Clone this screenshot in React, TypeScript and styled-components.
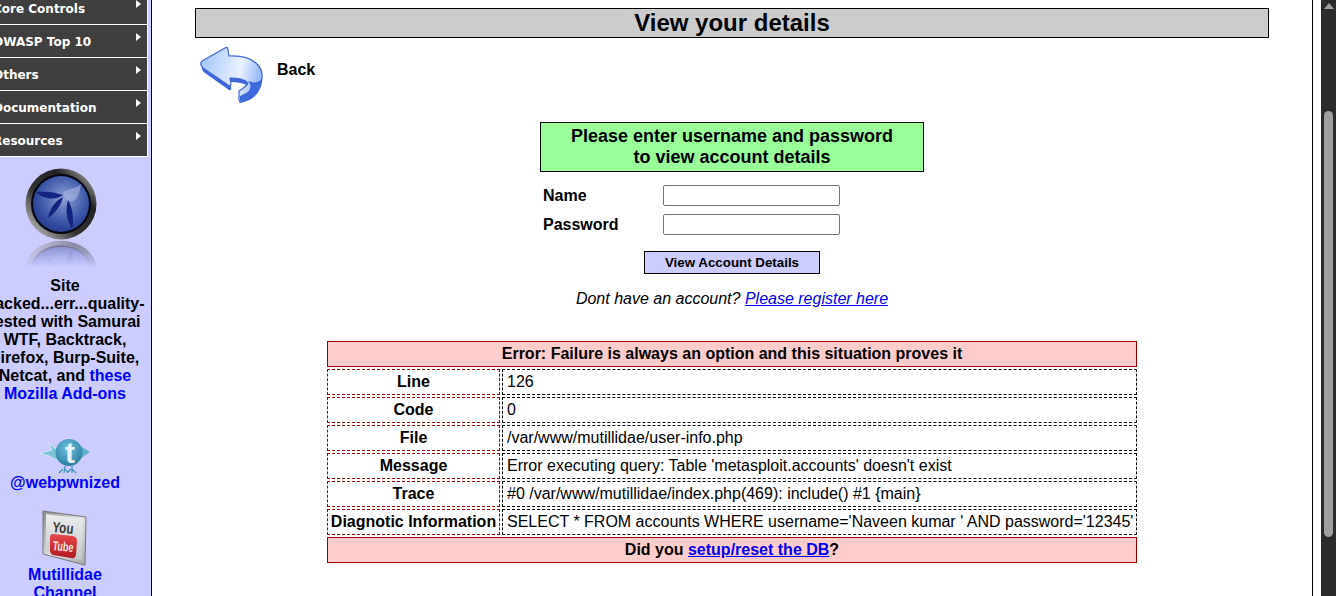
import React from 'react';
import styled, { createGlobalStyle } from 'styled-components';

const GlobalStyle = createGlobalStyle`
    html, body {
        margin: 0;
        padding: 0;
        background-color: #fff;
        overflow: hidden;
    }
    body {
        font-family: "Liberation Sans", Arial, sans-serif;
        font-size: 16px;
        color: #000;
    }
`;

const Viewport = styled.div`
    display: flex;
    width: 1336px;
    height: 596px;
    overflow: hidden;
    background-color: #fff;
`;

const Page = styled.div`
    display: flex;
    width: 1313px;
    flex-shrink: 0;
    border-right: 1px solid #000;
    box-sizing: border-box;
`;

const Gutter = styled.div`
    width: 8px;
    flex-shrink: 0;
`;

const ScrollTrack = styled.div`
    width: 15px;
    flex-shrink: 0;
    background-color: #2b2b2b;
    display: flex;
    flex-direction: column;
    align-items: center;
    padding-top: 3px;
    box-sizing: border-box;
`;

const ScrollArrow = styled.div`
    width: 0;
    height: 0;
    border-left: 5px solid transparent;
    border-right: 5px solid transparent;
    border-bottom: 6px solid #9f9f9f;
`;

const ScrollThumb = styled.div`
    width: 9px;
    height: 426px;
    margin-top: 102px;
    border-radius: 5px;
    background-color: #9f9f9f;
`;

const Sidebar = styled.aside`
    width: 173px;
    margin-left: -21px;
    flex-shrink: 0;
    height: 596px;
    overflow: hidden;
    box-sizing: border-box;
    background-color: #ccccff;
    border-right: 1px solid #000;
    display: flex;
    flex-direction: column;
    align-items: center;
`;

const Menu = styled.ul`
    list-style: none;
    margin: -8px 0 0;
    padding: 0 3px 0 0;
    width: 100%;
    box-sizing: border-box;
    flex-shrink: 0;
`;

const MenuItem = styled.li`
    height: 33px;
    box-sizing: border-box;
    background-color: #3f3f3f;
    border-bottom: 1px solid #fff;
    border-right: 1px solid #fff;
    color: #fff;
    font-family: "DejaVu Sans", Verdana, sans-serif;
    font-size: 12px;
    font-weight: bold;
    line-height: 35px;
    padding-left: 14px;
    position: relative;
    &::after {
        content: '';
        position: absolute;
        right: 6px;
        top: 8px;
        width: 0;
        height: 0;
        border-top: 4px solid transparent;
        border-bottom: 4px solid transparent;
        border-left: 5px solid #fff;
    }
`;

const OwaspLogo = styled.svg`
    display: block;
    margin-top: 11px;
    margin-left: -6px;
    flex-shrink: 0;
`;

const SideNote = styled.div`
    margin-top: 5px;
    font-weight: bold;
    line-height: 18px;
    text-align: center;
    white-space: nowrap;
    flex-shrink: 0;
`;

const SideLink = styled.a`
    color: #0000ff;
    font-weight: bold;
    text-decoration: none;
`;

const TwitterIcon = styled.svg`
    display: block;
    margin-top: 35px;
    flex-shrink: 0;
`;

const YoutubeIcon = styled.svg`
    display: block;
    margin-top: 18px;
    flex-shrink: 0;
`;

const SideCaption = styled.div`
    line-height: 18px;
    text-align: center;
    flex-shrink: 0;
`;

const Content = styled.main`
    flex: 1;
    min-width: 0;
    padding: 8px 43px 0;
    display: flex;
    flex-direction: column;
    align-items: center;
`;

const PageTitle = styled.h1`
    margin: 0;
    width: 100%;
    height: 30px;
    box-sizing: border-box;
    background-color: #cccccc;
    border: 1px solid #000;
    font-size: 24px;
    font-weight: bold;
    line-height: 27px;
    text-align: center;
`;

const BackRow = styled.div`
    display: flex;
    align-items: flex-start;
    width: 100%;
    margin-top: 7px;
    padding-left: 5px;
    box-sizing: border-box;
`;

const BackLabel = styled.span`
    margin-left: 13px;
    margin-top: 16px;
    font-weight: bold;
    line-height: 18px;
`;

const Notice = styled.div`
    width: 384px;
    height: 50px;
    margin-top: 17px;
    box-sizing: border-box;
    background-color: #99ff99;
    border: 1px solid #000;
    font-size: 18px;
    font-weight: bold;
    line-height: 21px;
    text-align: center;
    padding-top: 3px;
`;

const LoginForm = styled.form`
    width: 384px;
    margin-top: 13px;
    display: flex;
    flex-direction: column;
    align-items: center;
`;

const FieldRow = styled.label`
    display: flex;
    align-items: center;
    width: 100%;
    height: 21px;
    margin-bottom: 8px;
    padding-left: 3px;
    box-sizing: border-box;
    font-weight: bold;
`;

const FieldName = styled.span`
    width: 120px;
`;

const FieldInput = styled.input`
    width: 177px;
    height: 21px;
    box-sizing: border-box;
    border: 1px solid #767676;
    border-radius: 2px;
    background-color: #fff;
    padding: 0 2px;
`;

const SubmitButton = styled.button`
    width: 176px;
    height: 23px;
    margin-top: 8px;
    box-sizing: border-box;
    border: 1px solid #000;
    border-radius: 0;
    background-color: #ccccff;
    color: #000;
    font-family: "Liberation Sans", Arial, sans-serif;
    font-size: 13.33px;
    font-weight: bold;
    padding: 0;
`;

const RegisterLine = styled.p`
    margin: 16px 0 0;
    font-style: italic;
    line-height: 18px;
    text-align: center;
    a {
        color: #0000ee;
    }
`;

const ErrorTable = styled.table`
    width: 814px;
    margin-top: 31px;
    table-layout: fixed;
    border-collapse: separate;
    border-spacing: 2px;
    flex-shrink: 0;
`;

const LabelColumn = styled.col`
    width: 173px;
`;

const Banner = styled.th`
    height: 26px;
    box-sizing: border-box;
    padding: 0;
    background-color: #ffcccc;
    border: 1px solid #990000;
    font-weight: bold;
    text-align: center;
    a {
        color: #0000ee;
    }
`;

const RowLabel = styled.td`
    height: 26px;
    box-sizing: border-box;
    padding: 0;
    border: 1px dashed #990000;
    font-weight: bold;
    text-align: center;
    white-space: nowrap;
`;

const RowValue = styled.td`
    height: 26px;
    box-sizing: border-box;
    padding: 0 0 0 4px;
    border: 1px dashed #000;
    white-space: nowrap;
`;

const menuItems = ['Core Controls', 'OWASP Top 10', 'Others', 'Documentation', 'Resources'];

const errorRows = [
    ['Line', '126'],
    ['Code', '0'],
    ['File', '/var/www/mutillidae/user-info.php'],
    ['Message', "Error executing query: Table 'metasploit.accounts' doesn't exist"],
    ['Trace', '#0 /var/www/mutillidae/index.php(469): include() #1 {main}'],
    ['Diagnotic Information', "SELECT * FROM accounts WHERE username='Naveen kumar ' AND password='12345'"],
];

const WaspBadge = () => (
    <>
        <circle cx="36" cy="36" r="35.5" fill="url(#owaspRing)" />
        <circle cx="36" cy="36" r="30" fill="#05060f" />
        <circle cx="36" cy="36" r="28" fill="url(#owaspDisc)" />
        <path d="M38 24 C46 20 52 20 56 16 C55 22 54 30 48 33 C44 35 40 31 38 24 Z" fill="#a9b8e0" opacity="0.6" />
        <path d="M11 24 C20 23 30 24 38 27 C30 33 18 31 11 24 Z" fill="#14237f" />
        <path d="M38 29 C36 38 30 45 23 50 C24 42 30 33 38 29 Z" fill="#14237f" />
        <path d="M43 32 C48 40 49 52 47 61 C42 53 40 42 43 32 Z" fill="#14237f" />
    </>
);

const App = () => {
    return <Viewport>
        <GlobalStyle />
        <Page>
            <Sidebar>
                <Menu>
                    {menuItems.map((item) => <MenuItem key={item}>{item}</MenuItem>)}
                </Menu>
                <OwaspLogo width="74" height="104" viewBox="0 0 74 104">
                    <defs>
                        <linearGradient id="owaspRing" x1="0" y1="1" x2="1" y2="0">
                            <stop offset="0" stopColor="#e0e0e0" />
                            <stop offset="0.4" stopColor="#333" />
                            <stop offset="0.7" stopColor="#222" />
                            <stop offset="1" stopColor="#cfcfcf" />
                        </linearGradient>
                        <radialGradient id="owaspDisc" cx="0.55" cy="0.4" r="0.7">
                            <stop offset="0" stopColor="#8ea0d6" />
                            <stop offset="0.6" stopColor="#3c56a8" />
                            <stop offset="1" stopColor="#1c2f85" />
                        </radialGradient>
                        <linearGradient id="owaspFade" x1="0" y1="0" x2="0" y2="1">
                            <stop offset="0" stopColor="#fff" stopOpacity="0.55" />
                            <stop offset="0.85" stopColor="#fff" stopOpacity="0" />
                        </linearGradient>
                        <mask id="owaspMask">
                            <rect x="0" y="72" width="74" height="32" fill="url(#owaspFade)" />
                        </mask>
                    </defs>
                    <WaspBadge />
                    <g mask="url(#owaspMask)">
                        <g transform="translate(0 130) scale(1 -0.8)">
                            <WaspBadge />
                        </g>
                    </g>
                </OwaspLogo>
                <SideNote>
                    Site<br />
                    hacked...err...quality-<br />
                    tested with Samurai<br />
                    WTF, Backtrack,<br />
                    Firefox, Burp-Suite,<br />
                    Netcat, and <SideLink href="#">these</SideLink><br />
                    <SideLink href="#">Mozilla Add-ons</SideLink>
                </SideNote>
                <TwitterIcon width="52" height="36" viewBox="0 0 52 36">
                    <defs>
                        <radialGradient id="birdBody" cx="0.45" cy="0.35" r="0.7">
                            <stop offset="0" stopColor="#6fc3dd" />
                            <stop offset="1" stopColor="#26799f" />
                        </radialGradient>
                    </defs>
                    <path d="M1 15 L13 12 L9 5 L20 13 L18 22 L10 18 Z" fill="#7fc5da" stroke="#e6f4f8" strokeWidth="0.6" />
                    <path d="M40 7 L51 14 L41 21 Z" fill="#5fb1cb" />
                    <path d="M26 28 L25 35 M24 31 L20 35 M26 31 L29 35 M33 28 L33 35 M32 31 L28 35 M33 31 L37 35" stroke="#3f93b0" strokeWidth="1.2" fill="none" />
                    <circle cx="30" cy="14.5" r="13.5" fill="url(#birdBody)" />
                    <text x="31" y="25" textAnchor="middle" fontFamily="'Liberation Sans', sans-serif" fontSize="30" fontWeight="bold" fill="#eaf6fa">t</text>
                </TwitterIcon>
                <SideCaption>
                    <SideLink href="#">@webpwnized</SideLink>
                </SideCaption>
                <YoutubeIcon width="46" height="56" viewBox="0 0 46 56">
                    <defs>
                        <linearGradient id="tileMetal" x1="0" y1="0" x2="1" y2="1">
                            <stop offset="0" stopColor="#8a8a8a" />
                            <stop offset="0.5" stopColor="#e4e4e4" />
                            <stop offset="1" stopColor="#a5a8aa" />
                        </linearGradient>
                        <linearGradient id="tileFace" x1="0" y1="0" x2="0" y2="1">
                            <stop offset="0" stopColor="#eceded" />
                            <stop offset="1" stopColor="#c4c7c9" />
                        </linearGradient>
                        <linearGradient id="tileRed" x1="0" y1="0" x2="0" y2="1">
                            <stop offset="0" stopColor="#e8474a" />
                            <stop offset="1" stopColor="#b01a20" />
                        </linearGradient>
                    </defs>
                    <path d="M1 1 L44 7 L43 55 L1 44 Z" fill="url(#tileMetal)" stroke="#777" strokeWidth="1" />
                    <path d="M4 4 L41 9 L40 50 L4 41 Z" fill="url(#tileFace)" />
                    <text x="21" y="23" textAnchor="middle" fontFamily="'Liberation Sans', sans-serif" fontSize="15" fontWeight="bold" fill="#3a3a3a" transform="rotate(6 21 18)" textLength="21" lengthAdjust="spacingAndGlyphs">You</text>
                    <path d="M11 24 L31 26 Q35 27 35 31 L34 44 Q34 49 29 48 L11 45 Q8 44 8 40 L8 28 Q8 24 11 24 Z" fill="url(#tileRed)" />
                    <text x="21" y="41" textAnchor="middle" fontFamily="'Liberation Sans', sans-serif" fontSize="13" fontWeight="bold" fill="#f7e4e4" transform="rotate(6 21 37)" textLength="21" lengthAdjust="spacingAndGlyphs">Tube</text>
                </YoutubeIcon>
                <SideCaption>
                    <SideLink href="#">Mutillidae<br />Channel</SideLink>
                </SideCaption>
            </Sidebar>
            <Content>
                <PageTitle>View your details</PageTitle>
                <BackRow>
                    <svg width="64" height="60" viewBox="0 0 64 60">
                        <defs>
                            <linearGradient id="arrowTop" x1="0" y1="0" x2="1" y2="0.2">
                                <stop offset="0" stopColor="#9fc2fb" />
                                <stop offset="0.7" stopColor="#eaf1ff" />
                                <stop offset="1" stopColor="#9dbdf6" />
                            </linearGradient>
                        </defs>
                        <path d="M2 18 L2 24 Q2 26 5 28 L29 45 Q32 46 31 42 L30 37 Q42 37 48 41 L39 46 L40 58 Q58 55 62 38 Q63 28 60 24 Z" fill="#4068dc" />
                        <path d="M2 16 L25 3 Q28 1 28 5 L29 11 Q47 10 56 18 Q63 24 62 33 Q60 46 42 57 Q39 58 39 54 L39 46 Q47 41 48 38 Q44 33 30 33 L31 39 Q31 42 28 40 L3 23 Q-1 19 2 16 Z" fill="url(#arrowTop)" stroke="#3f66d8" strokeWidth="1.2" strokeLinejoin="round" />
                        <path d="M48 36 Q53 41 48 47 L40 51 L40 57 Q58 50 62 33 Q58 40 48 36 Z" fill="#3d69de" />
                    </svg>
                    <BackLabel>Back</BackLabel>
                </BackRow>
                <Notice>Please enter username and password<br />to view account details</Notice>
                <LoginForm onSubmit={(e) => e.preventDefault()}>
                    <FieldRow>
                        <FieldName>Name</FieldName>
                        <FieldInput type="text" />
                    </FieldRow>
                    <FieldRow>
                        <FieldName>Password</FieldName>
                        <FieldInput type="password" />
                    </FieldRow>
                    <SubmitButton type="submit">View Account Details</SubmitButton>
                </LoginForm>
                <RegisterLine>Dont have an account? <a href="#">Please register here</a></RegisterLine>
                <ErrorTable>
                    <colgroup>
                        <LabelColumn />
                        <col />
                    </colgroup>
                    <tbody>
                        <tr>
                            <Banner colSpan={2}>Error: Failure is always an option and this situation proves it</Banner>
                        </tr>
                        {errorRows.map(([label, value]) => <tr key={label}>
                            <RowLabel>{label}</RowLabel>
                            <RowValue>{value}</RowValue>
                        </tr>)}
                        <tr>
                            <Banner colSpan={2}>Did you <a href="#">setup/reset the DB</a>?</Banner>
                        </tr>
                    </tbody>
                </ErrorTable>
            </Content>
        </Page>
        <Gutter />
        <ScrollTrack>
            <ScrollArrow />
            <ScrollThumb />
        </ScrollTrack>
    </Viewport>;
};

export default App;
